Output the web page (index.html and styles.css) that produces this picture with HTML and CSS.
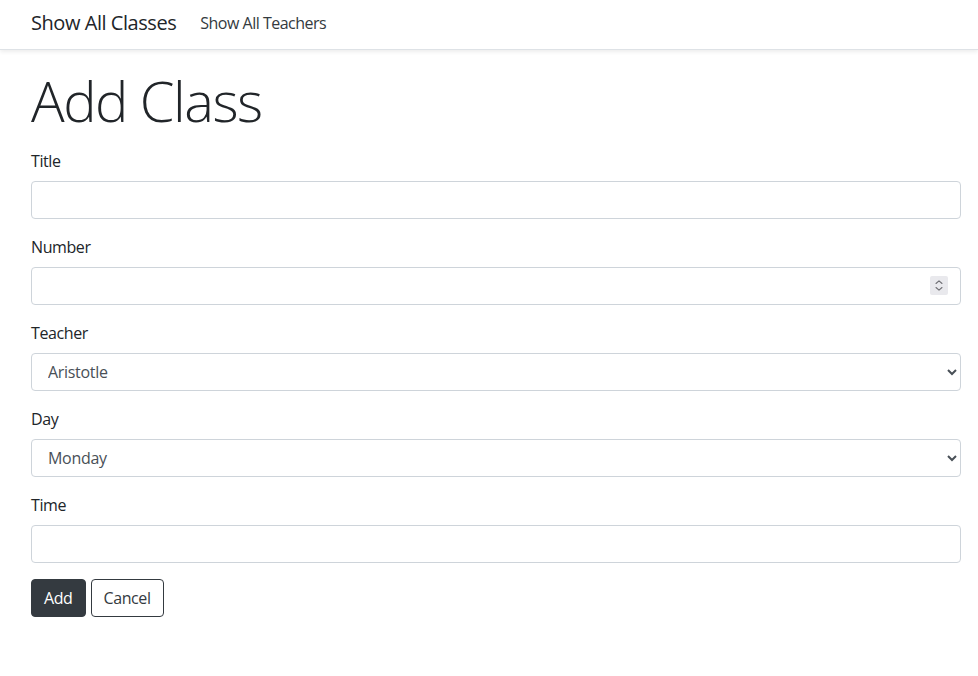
FILE: index.html
```html
<!DOCTYPE html>
<html lang="en">
<head>
<meta charset="utf-8">
<title>Add Class</title>
<link rel="stylesheet" href="styles.css">
</head>
<body>
<nav class="navbar">
  <a class="brand" href="#">Show All Classes</a>
  <a class="nav-link" href="#">Show All Teachers</a>
</nav>
<main class="content">
  <h1 class="title">Add Class</h1>
  <form class="form">
    <div class="form-group">
      <label class="label" for="title">Title</label>
      <input class="control" id="title" type="text">
    </div>
    <div class="form-group">
      <label class="label" for="number">Number</label>
      <div class="number-wrap">
        <input class="control" id="number" type="number">
        <span class="spinner" aria-hidden="true">
          <svg width="18" height="19" viewBox="0 0 18 19">
            <path d="M6 7.5 L9 4.8 L12 7.5" fill="none" stroke="#6f6f74" stroke-width="1.1" stroke-linecap="round" stroke-linejoin="round"/>
            <path d="M6 11.5 L9 14.2 L12 11.5" fill="none" stroke="#6f6f74" stroke-width="1.1" stroke-linecap="round" stroke-linejoin="round"/>
          </svg>
        </span>
      </div>
    </div>
    <div class="form-group">
      <label class="label" for="teacher">Teacher</label>
      <select class="control" id="teacher">
        <option>Aristotle</option>
      </select>
    </div>
    <div class="form-group">
      <label class="label" for="day">Day</label>
      <select class="control" id="day">
        <option>Monday</option>
      </select>
    </div>
    <div class="form-group">
      <label class="label" for="time">Time</label>
      <input class="control" id="time" type="text">
    </div>
    <div class="actions">
      <button class="btn btn-dark" type="button">Add</button>
      <button class="btn btn-outline" type="button">Cancel</button>
    </div>
  </form>
</main>
</body>
</html>
```
FILE: styles.css
```css
* { box-sizing: border-box; }
html, body { margin: 0; padding: 0; background: #fff; }
body {
  font-family: "Open Sans", "Noto Sans", sans-serif;
  font-size: 16px;
  line-height: 1.5;
  letter-spacing: -0.4px;
  color: #212529;
}
.navbar {
  height: 50px;
  display: flex;
  align-items: center;
  padding: 0 17px 3px 31px;
  border-bottom: 1px solid #dee2e6;
  box-shadow: 0 2px 4px rgba(0,0,0,.075);
}
.brand {
  font-size: 20px;
  letter-spacing: -0.45px;
  color: #212529;
  text-decoration: none;
  margin-right: 24px;
}
.nav-link {
  font-size: 16px;
  letter-spacing: -0.5px;
  color: #343a40;
  text-decoration: none;
}
.content {
  padding: 17px 17px 0 31px;
}
.title {
  margin: 0 0 15px;
  font-size: 56px;
  font-weight: 300;
  line-height: 1.2;
  letter-spacing: -1.5px;
}
.form-group { margin-bottom: 16px; }
.label {
  display: block;
  margin-bottom: 8px;
}
.control {
  display: block;
  width: 100%;
  height: 38px;
  padding: 6px 12px;
  font-family: inherit;
  font-size: 16px;
  line-height: 1.5;
  letter-spacing: -0.3px;
  color: #495057;
  background: #fff;
  border: 1px solid #ced4da;
  border-radius: 4px;
}
.number-wrap { position: relative; }
input[type=number] { -moz-appearance: textfield; }
input[type=number]::-webkit-inner-spin-button,
input[type=number]::-webkit-outer-spin-button { -webkit-appearance: none; margin: 0; }
.spinner {
  position: absolute;
  right: 13px;
  top: 9px;
  width: 18px;
  height: 19px;
  background: #e9e9ed;
  border-radius: 2px;
  display: flex;
}
.actions { display: flex; gap: 5px; }
.btn {
  height: 38px;
  padding: 6px 12px;
  font-family: inherit;
  font-size: 16px;
  line-height: 1.5;
  letter-spacing: -0.4px;
  border-radius: 4px;
  border: 1px solid #343a40;
  cursor: pointer;
}
.btn-dark { background: #343a40; color: #fff; }
.btn-outline { background: #fff; color: #343a40; }
```
